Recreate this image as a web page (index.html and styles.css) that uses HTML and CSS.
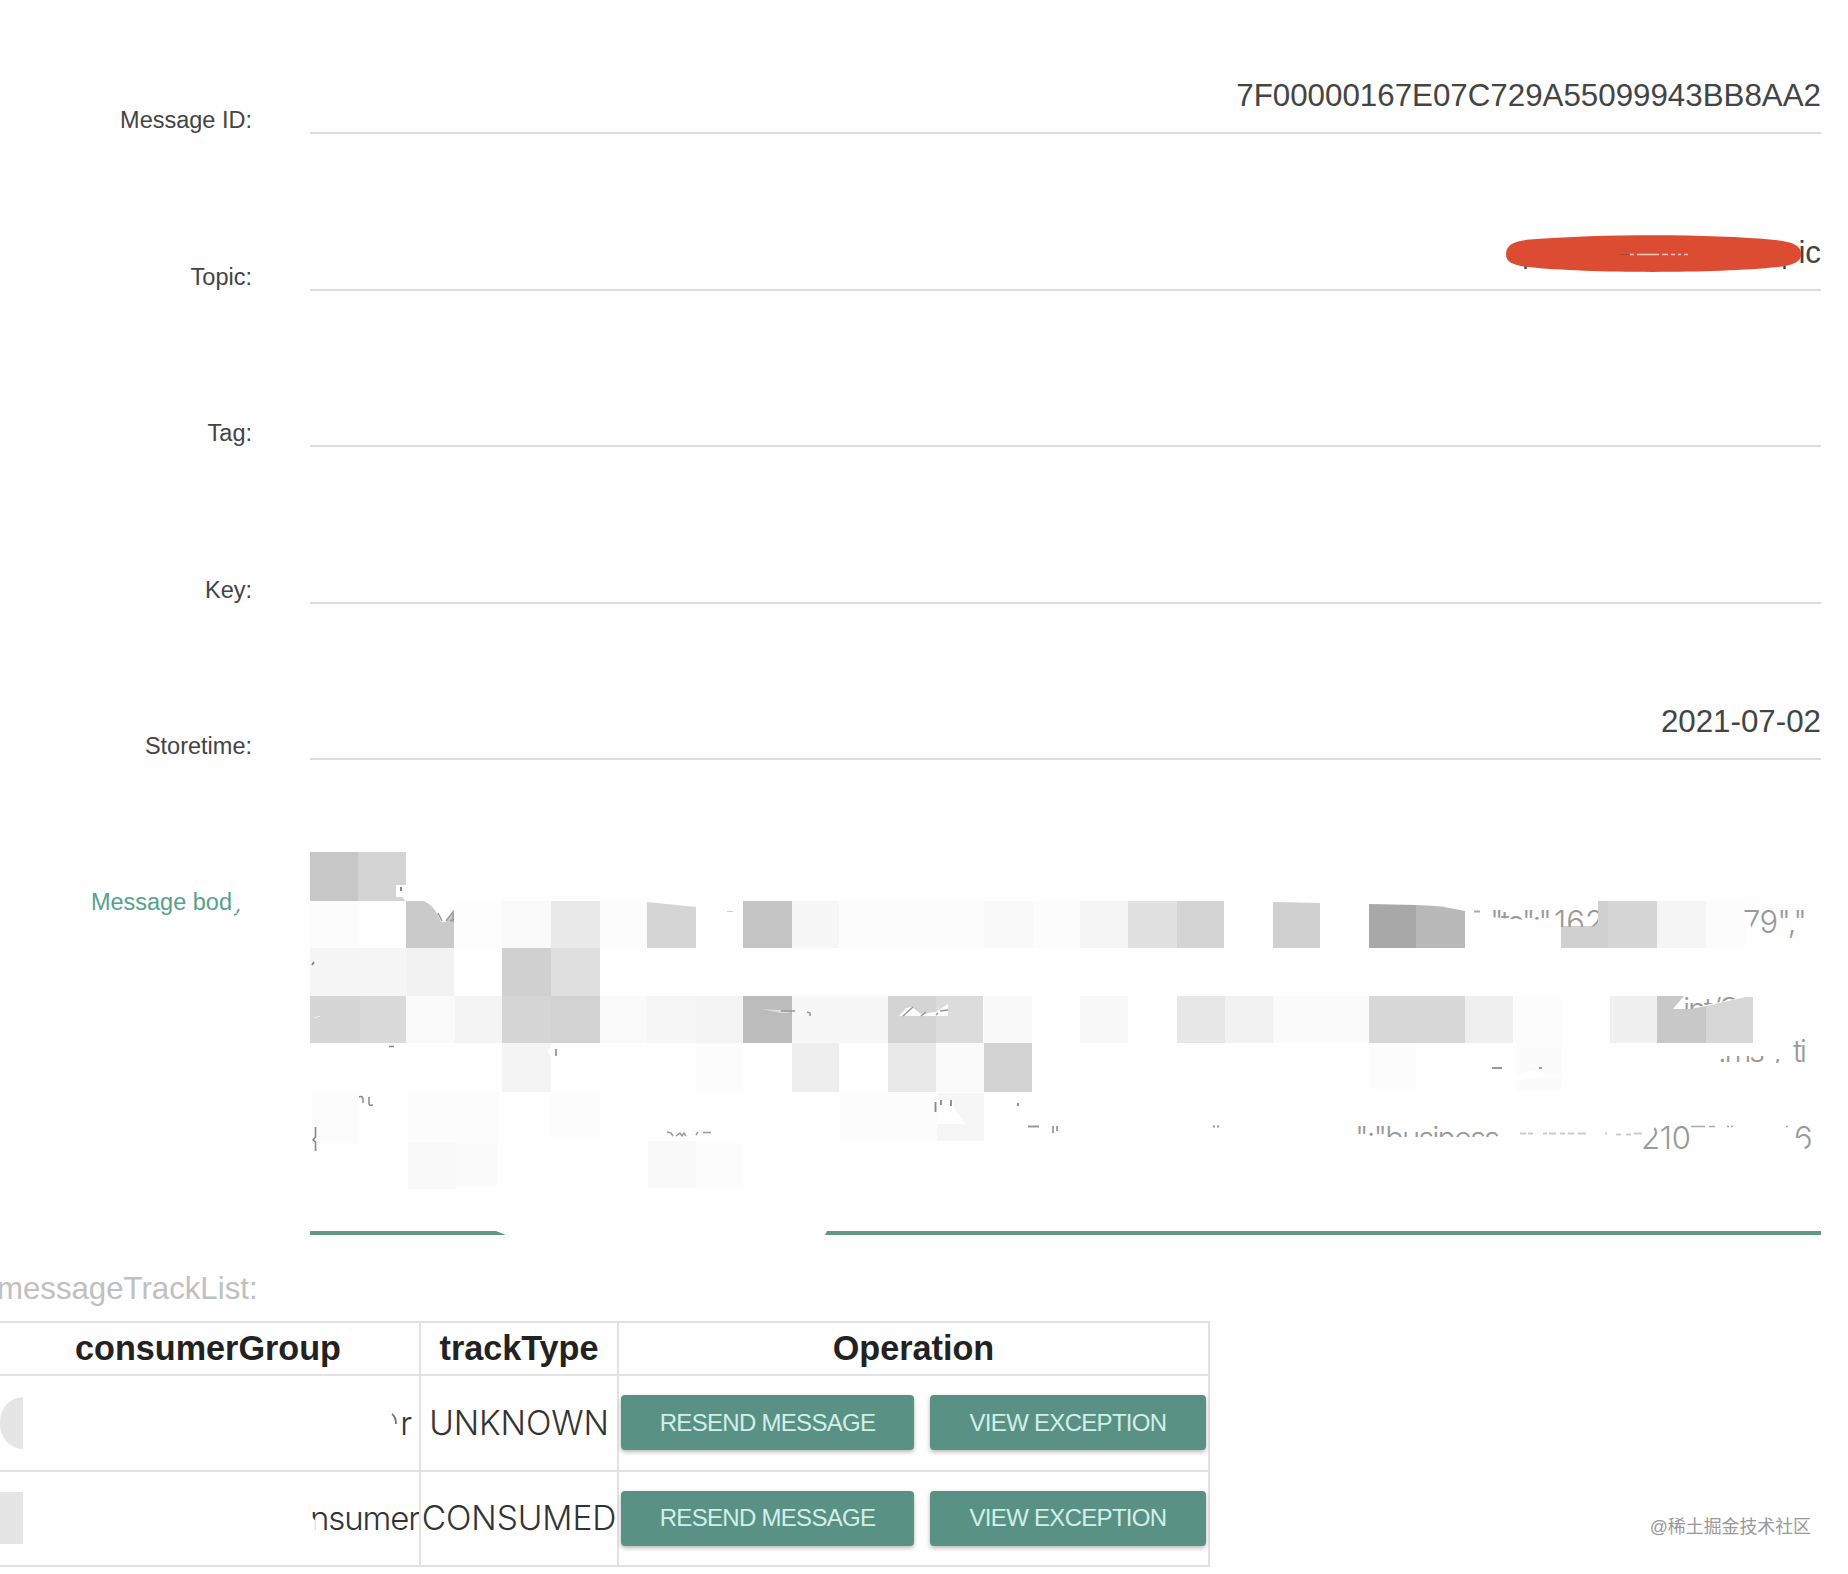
FILE: index.html
```html
<!DOCTYPE html>
<html lang="en">

<head>
    <meta charset="UTF-8">
    <meta name="viewport" content="width=device-width, initial-scale=1.0">
    <title>Message Detail</title>
    <link rel="stylesheet" href="styles.css">
</head>

<body>
    <div class="dialog">
        <form class="detail">
            <div class="field">
                <label>Message ID:</label>
                <div class="value"><span class="message-id">7F00000167E07C729A55099943BB8AA2</span></div>
            </div>
            <div class="field">
                <label>Topic:</label>
                <div class="value">
                    <span>ic</span>
                    <svg class="scribble" width="300" height="42" viewBox="1504 232 300 42">
                        <path d="M1525.5 262v7M1784.5 262v7" stroke="#444" stroke-width="2.4" />
                        <path d="M1506 254C1506 245 1514 241 1530 239.500C1600 234 1710 233.500 1775 240C1793 242 1801 246 1801 254C1801 262 1794 265 1778 267C1715 273.500 1590 273.500 1528 267C1512 265 1506 262 1506 254Z" fill="#db4c32" />
                        <path d="M1620 254.500h9" stroke="#a94733" stroke-width="1" />
                        <path d="M1630 254.500h4M1637 254.500h22M1662 254.500h6M1671 254.500h4M1678 254.500h3M1684 254.500h4" stroke="#f3c9bd" stroke-width="1.6" />
                    </svg>
                </div>
            </div>
            <div class="field">
                <label>Tag:</label>
                <div class="value"></div>
            </div>
            <div class="field">
                <label>Key:</label>
                <div class="value"></div>
            </div>
            <div class="field">
                <label>Storetime:</label>
                <div class="value"><span class="date">2021-07-02</span></div>
            </div>
            <div class="field body-field">
                <label>Message bod<svg class="tail" width="8" height="8" viewBox="0 0 8 8"><path d="M1 7L4 6M4 5L6 1" stroke="#5f9c8c" stroke-width="1.8" /></svg></label>
                <svg class="body-text" width="1511" height="453" viewBox="310 783 1511 453">
                    <defs>
                        <clipPath id="clipTo"><path d="M1490 905H1556V917L1535 920L1510 919L1490 917Z" /></clipPath>
                        <clipPath id="clipNumber"><path d="M1553 905H1598V922Q1595 928 1588 927H1553Z" /></clipPath>
                        <clipPath id="clipPhone"><path d="M1740 900H1821V950H1757L1750 922L1740 918Z" /></clipPath>
                        <clipPath id="clipPoint"><path d="M1674 1009L1684 997H1746L1710 1004L1692 1009Z" /></clipPath>
                        <clipPath id="clipMs"><path d="M1710 1056H1782V1063H1710Z" /></clipPath>
                        <clipPath id="clipBusiness"><path d="M1350 1120H1502V1137H1350Z" /></clipPath>
                        <clipPath id="clipCode"><path d="M1640 1152L1656 1125H1690V1152Z" /></clipPath>
                        <clipPath id="clipSix"><path d="M1794 1120H1815V1152H1806L1801 1138H1794Z" /></clipPath>
                    </defs>

                    <!-- row 1 -->
                    <rect x="310" y="852" width="48" height="49" fill="#c7c7c7" />
                    <path d="M358 852H406V885H396V897H402L406 901H358Z" fill="#d4d4d4" />
                    <path d="M401 887v4" stroke="#888" stroke-width="2" />

                    <!-- row 2 -->
                    <rect x="310" y="901" width="49" height="47" fill="#fcfcfc" />
                    <path d="M406 901H424Q436 907 441 922H446L454 912V948H406Z" fill="#cacaca" />
                    <path d="M438 913L442 921M446 921L453 912V922M450 921L454 919M463 922L466 916" stroke="#999" stroke-width="1.5" fill="none" />
                    <rect x="455" y="901" width="48" height="47" fill="#fdfdfd" />
                    <rect x="502" y="901" width="49" height="47" fill="#fafafa" />
                    <rect x="551" y="901" width="49" height="47" fill="#e8e8e8" />
                    <rect x="600" y="901" width="47" height="47" fill="#fcfcfc" />
                    <path d="M647 902L696 907V948H647Z" fill="#d5d5d5" />
                    <rect x="727" y="911" width="6" height="1" fill="#ccc" />
                    <rect x="743" y="901" width="49" height="47" fill="#c5c5c5" />
                    <rect x="792" y="901" width="47" height="47" fill="#f7f7f7" />
                    <rect x="839" y="901" width="145" height="47" fill="#fcfcfc" />
                    <rect x="984" y="901" width="49" height="47" fill="#f9f9f9" />
                    <rect x="1033" y="901" width="47" height="47" fill="#fcfcfc" />
                    <rect x="1080" y="901" width="48" height="47" fill="#f5f5f5" />
                    <rect x="1128" y="901" width="49" height="47" fill="#e1e1e1" />
                    <rect x="1177" y="901" width="47" height="47" fill="#d4d4d4" />
                    <path d="M1273 902L1320 903V948H1273Z" fill="#d0d0d0" />
                    <path d="M1369 904L1416 905V948H1369Z" fill="#a8a8a8" />
                    <path d="M1416 905Q1440 905 1465 911V948H1416Z" fill="#b9b9b9" />
                    <path d="M1561 926H1590Q1598 926 1598 916V901H1609V948H1561Z" fill="#d0d0d0" />
                    <rect x="1608" y="901" width="49" height="47" fill="#d6d6d6" />
                    <rect x="1657" y="901" width="49" height="47" fill="#f5f5f5" />
                    <rect x="1706" y="901" width="39" height="47" fill="#fcfcfc" />

                    <!-- row 3 -->
                    <rect x="310" y="948" width="97" height="48" fill="#f5f5f5" />
                    <rect x="407" y="948" width="47" height="48" fill="#f2f2f2" />
                    <rect x="502" y="948" width="49" height="48" fill="#d0d0d0" />
                    <rect x="551" y="948" width="49" height="48" fill="#dfdfdf" />
                    <path d="M312 965L314 962" stroke="#777" stroke-width="1.5" />

                    <!-- row 4 -->
                    <rect x="310" y="996" width="50" height="47" fill="#d6d6d6" />
                    <rect x="360" y="996" width="46" height="47" fill="#dadada" />
                    <rect x="406" y="996" width="49" height="47" fill="#fafafa" />
                    <rect x="455" y="996" width="47" height="47" fill="#f4f4f4" />
                    <rect x="502" y="996" width="49" height="47" fill="#d5d5d5" />
                    <rect x="551" y="996" width="49" height="47" fill="#d2d2d2" />
                    <rect x="600" y="996" width="47" height="47" fill="#fafafa" />
                    <rect x="647" y="996" width="49" height="47" fill="#f6f6f6" />
                    <rect x="696" y="996" width="47" height="47" fill="#f3f3f3" />
                    <rect x="743" y="996" width="49" height="47" fill="#bcbcbc" />
                    <rect x="792" y="996" width="96" height="47" fill="#f7f7f7" />
                    <path d="M762 1009L780 1010L791 1013H781Z" fill="#dedede" />
                    <path d="M314 1018L320 1016" stroke="#f0f0f0" stroke-width="1" />
                    <path d="M781 1011h14M807 1012L810 1013V1016" stroke="#999" stroke-width="1.6" fill="none" />
                    <rect x="888" y="996" width="48" height="47" fill="#d4d4d4" />
                    <rect x="936" y="996" width="47" height="47" fill="#dcdcdc" />
                    <path d="M899 1016L906 1008L912 1007L921 1014L936 1012L948 1004V1016Z" fill="#fdfdfd" />
                    <path d="M903 1016L913 1007M921 1016L926 1012M936 1015L938 1013M940 1011L948 1010" stroke="#999" stroke-width="1.5" />
                    <rect x="984" y="996" width="48" height="47" fill="#f9f9f9" />
                    <rect x="1080" y="996" width="48" height="47" fill="#f8f8f8" />
                    <rect x="1177" y="996" width="48" height="47" fill="#e7e7e7" />
                    <rect x="1225" y="996" width="48" height="47" fill="#f2f2f2" />
                    <rect x="1273" y="996" width="96" height="47" fill="#fbfbfb" />
                    <rect x="1369" y="996" width="96" height="47" fill="#d7d7d7" />
                    <rect x="1465" y="996" width="48" height="47" fill="#efefef" />
                    <rect x="1514" y="996" width="47" height="47" fill="#fcfcfc" />
                    <rect x="1610" y="996" width="47" height="47" fill="#f0f0f0" />
                    <path d="M1657 996H1684L1673 1009H1690L1706 1006V1043H1657Z" fill="#c8c8c8" />
                    <path d="M1706 1006L1746 997H1753V1043H1706Z" fill="#d7d7d7" />

                    <!-- row 5 -->
                    <path d="M502 1043H551V1047L547 1051L551 1057V1092H502Z" fill="#f4f4f4" />
                    <path d="M389 1046.500h5M556 1049v7" stroke="#888" stroke-width="1.6" />
                    <rect x="696" y="1043" width="47" height="49" fill="#fcfcfc" />
                    <rect x="792" y="1043" width="47" height="49" fill="#eee" />
                    <rect x="888" y="1043" width="48" height="49" fill="#e9e9e9" />
                    <rect x="936" y="1043" width="48" height="49" fill="#fafafa" />
                    <rect x="984" y="1043" width="48" height="49" fill="#d2d2d2" />
                    <rect x="1369" y="1043" width="47" height="46" fill="#fcfcfc" />
                    <path d="M1517 1043H1561V1076L1530 1070L1517 1075ZM1517 1080L1561 1077V1091H1517Z" fill="#fbfbfb" />
                    <path d="M1492 1068h10M1539 1068h3" stroke="#999" stroke-width="2" />

                    <!-- rows 6 and 7 -->
                    <rect x="312" y="1093" width="46" height="50" fill="#fcfcfc" />
                    <rect x="408" y="1093" width="91" height="50" fill="#fcfcfc" />
                    <rect x="551" y="1093" width="49" height="44" fill="#fcfcfc" />
                    <rect x="408" y="1143" width="48" height="46" fill="#f9f9f9" />
                    <rect x="456" y="1143" width="41" height="44" fill="#fbfbfb" />
                    <rect x="648" y="1141" width="48" height="47" fill="#f9f9f9" />
                    <rect x="696" y="1143" width="47" height="44" fill="#fcfcfc" />
                    <rect x="840" y="1093" width="97" height="48" fill="#fcfcfc" />
                    <path d="M937 1093H984V1141H937V1124H966L955 1110L952 1100H937Z" fill="#f6f6f6" />
                    <path d="M359 1097Q364 1095 363 1103M369 1097V1104Q369 1106 373 1105" stroke="#888" stroke-width="1.5" fill="none" />
                    <path d="M935.500 1102v10M941 1100v5M951 1100v6M1018 1103v3" stroke="#888" stroke-width="1.8" />
                    <path d="M667 1132L671 1133L673 1136M676 1136L680 1133L682 1136L684 1133L686 1136M696 1135L698 1132M703 1132.500h8" stroke="#999" stroke-width="1.5" fill="none" />
                    <path d="M1028 1126.500h11M1053 1126v7M1057 1126v5M1213 1126.500h2M1217 1126.500h2" stroke="#999" stroke-width="1.8" />
                    <path d="M315.500 1127V1137L313 1140L315.500 1142V1151" stroke="#888" stroke-width="1.6" fill="none" />

                    <!-- pieces of the message that are still readable -->
                    <g class="scraps">
                        <path d="M1474 911.500h6" stroke="#aaa" stroke-width="2" />
                        <text x="1490" y="933" textLength="62" clip-path="url(#clipTo)">"to":"</text>
                        <text x="1554" y="933" textLength="50" clip-path="url(#clipNumber)">162</text>
                        <text x="1743" y="933" textLength="64" clip-path="url(#clipPhone)">79","</text>
                        <text x="1683" y="1020" textLength="56" clip-path="url(#clipPoint)">int/S</text>
                        <text x="1718" y="1062" textLength="64" clip-path="url(#clipMs)">.ms ',</text>
                        <text x="1793" y="1062" textLength="14">ti</text>
                        <text x="1355" y="1149" textLength="145" clip-path="url(#clipBusiness)">":"business</text>
                        <text x="1641" y="1149" textLength="50" clip-path="url(#clipCode)">210</text>
                        <text x="1794" y="1149" clip-path="url(#clipSix)">6</text>
                        <path d="M1520 1133.500h6M1528 1133.500h5M1543 1133.500h4M1549 1133.500h7M1560 1133.500h5M1568 1133.500h6M1578 1133.500h8M1605 1133.500h2M1616 1134.500h5M1626 1134.500h5M1634 1133.500h8" stroke="#ccc" stroke-width="1.8" />
                        <path d="M1691 1126.500h14M1709 1126.500h6M1727 1126.500h2M1731 1126.500h2M1786 1126.500h2" stroke="#aaa" stroke-width="1.5" />
                    </g>

                    <!-- focused underline -->
                    <path d="M310 1231H496L506 1235H310ZM827 1231H1821V1235H825Z" fill="#5c9a87" />
                </svg>
            </div>
        </form>

        <div class="track-title">messageTrackList:</div>
        <table class="track">
            <colgroup>
                <col class="col-group">
                <col class="col-type">
                <col class="col-operation">
            </colgroup>
            <tr>
                <th>consumerGroup</th>
                <th>trackType</th>
                <th>Operation</th>
            </tr>
            <tr>
                <td>
                    <div class="group">
                        <span class="smudge round"></span>
                        <span class="name first"><svg width="8" height="22" viewBox="0 0 8 22"><path d="M1 1Q5 4 5 11" stroke="#777" stroke-width="1.8" fill="none" /></svg>r</span>
                    </div>
                </td>
                <td>UNKNOWN</td>
                <td>
                    <div class="buttons">
                        <button type="button" class="resend">RESEND MESSAGE</button>
                        <button type="button" class="view">VIEW EXCEPTION</button>
                    </div>
                </td>
            </tr>
            <tr>
                <td>
                    <div class="group">
                        <span class="smudge"></span>
                        <span class="name cut">nsumer</span>
                    </div>
                </td>
                <td>CONSUMED</td>
                <td>
                    <div class="buttons">
                        <button type="button" class="resend">RESEND MESSAGE</button>
                        <button type="button" class="view">VIEW EXCEPTION</button>
                    </div>
                </td>
            </tr>
        </table>
        <div class="watermark">@稀土掘金技术社区</div>
    </div>
</body>

</html>
```
FILE: styles.css
```css
body {
    margin: 0;
    background-color: #fefefe;
    font-family: "Liberation Sans", Arial, sans-serif;
    color: #444;
}

.dialog {
    position: relative;
    width: 1848px;
    height: 1574px;
    overflow: hidden;
}

.detail {
    height: 1236px;
}

.field {
    display: flex;
    height: 134px;
    margin-bottom: 22.5px;
}

.field label {
    box-sizing: border-box;
    width: 252px;
    margin-right: 58px;
    padding-top: 106px;
    font-size: 23.5px;
    line-height: 28px;
    text-align: right;
    white-space: nowrap;
}

.value {
    position: relative;
    box-sizing: border-box;
    width: 1511px;
    padding-top: 78px;
    border-bottom: 2px solid #dcdcdc;
    font-size: 31.3px;
    line-height: 36px;
    text-align: right;
}

.scribble {
    position: absolute;
    right: 17px;
    top: 75px;
}

.body-field {
    height: 453px;
    margin: 0.5px 0 0;
}

.body-field label {
    padding-top: 105px;
    padding-right: 11px;
    color: #58a08d;
}

.tail {
    margin-left: 1px;
    margin-bottom: -6px;
}

.body-text {
    display: block;
}

.scraps {
    font-family: Inter, "Liberation Sans", sans-serif;
    font-weight: 300;
    font-size: 31px;
    fill: #999;
}

.track-title {
    height: 85px;
    margin-left: -3px;
    box-sizing: border-box;
    padding-top: 35px;
    font-size: 31.2px;
    line-height: 36px;
    color: #c0c0c0;
}

.track {
    width: 1215px;
    margin-left: -5px;
    table-layout: fixed;
    border-collapse: collapse;
    color: #222;
}

.col-group {
    width: 424px;
}

.col-type {
    width: 198px;
}

.track th,
.track td {
    box-sizing: border-box;
    padding: 0;
    border: 2px solid #e2e2e2;
    text-align: center;
}

.track th {
    height: 53px;
    padding-bottom: 2px;
    font-size: 34.2px;
    line-height: 38px;
}

.track td {
    height: 95.5px;
    font-family: Inter, "Liberation Sans", sans-serif;
    font-weight: 300;
    font-size: 33.5px;
    letter-spacing: -0.1px;
    color: #333;
    white-space: nowrap;
}

.group {
    display: flex;
    align-items: center;
    justify-content: space-between;
    padding-left: 3px;
}

.smudge {
    width: 23px;
    height: 52px;
    background-color: #e5e5e5;
}

.smudge.round {
    border-radius: 24px 0 0 24px / 26px 0 0 26px;
}

.name {
    font-size: 33px;
    letter-spacing: -1.1px;
}

.name.first {
    padding-right: 8px;
}

.name.first svg {
    margin-right: 1px;
}

.name.cut {
    clip-path: polygon(0 0, 100% 0, 100% 100%, 5px 100%, 5px 22px, 0 16px);
}

.buttons {
    display: flex;
    gap: 16px;
    padding-left: 2px;
}

button {
    height: 55px;
    padding: 0;
    border: none;
    border-radius: 4px;
    background-color: #5a9185;
    box-shadow: 0 2px 4px rgba(0, 0, 0, 0.28);
    font-family: "Liberation Sans", Arial, sans-serif;
    font-size: 24px;
    letter-spacing: -0.7px;
    color: #d2efe8;
}

.resend {
    width: 293px;
}

.view {
    width: 276px;
}

.watermark {
    position: absolute;
    right: 37px;
    bottom: 34px;
    font-family: "Liberation Sans", "Noto Sans CJK SC", sans-serif;
    font-size: 17.9px;
    line-height: 26px;
    color: #999;
}
```
